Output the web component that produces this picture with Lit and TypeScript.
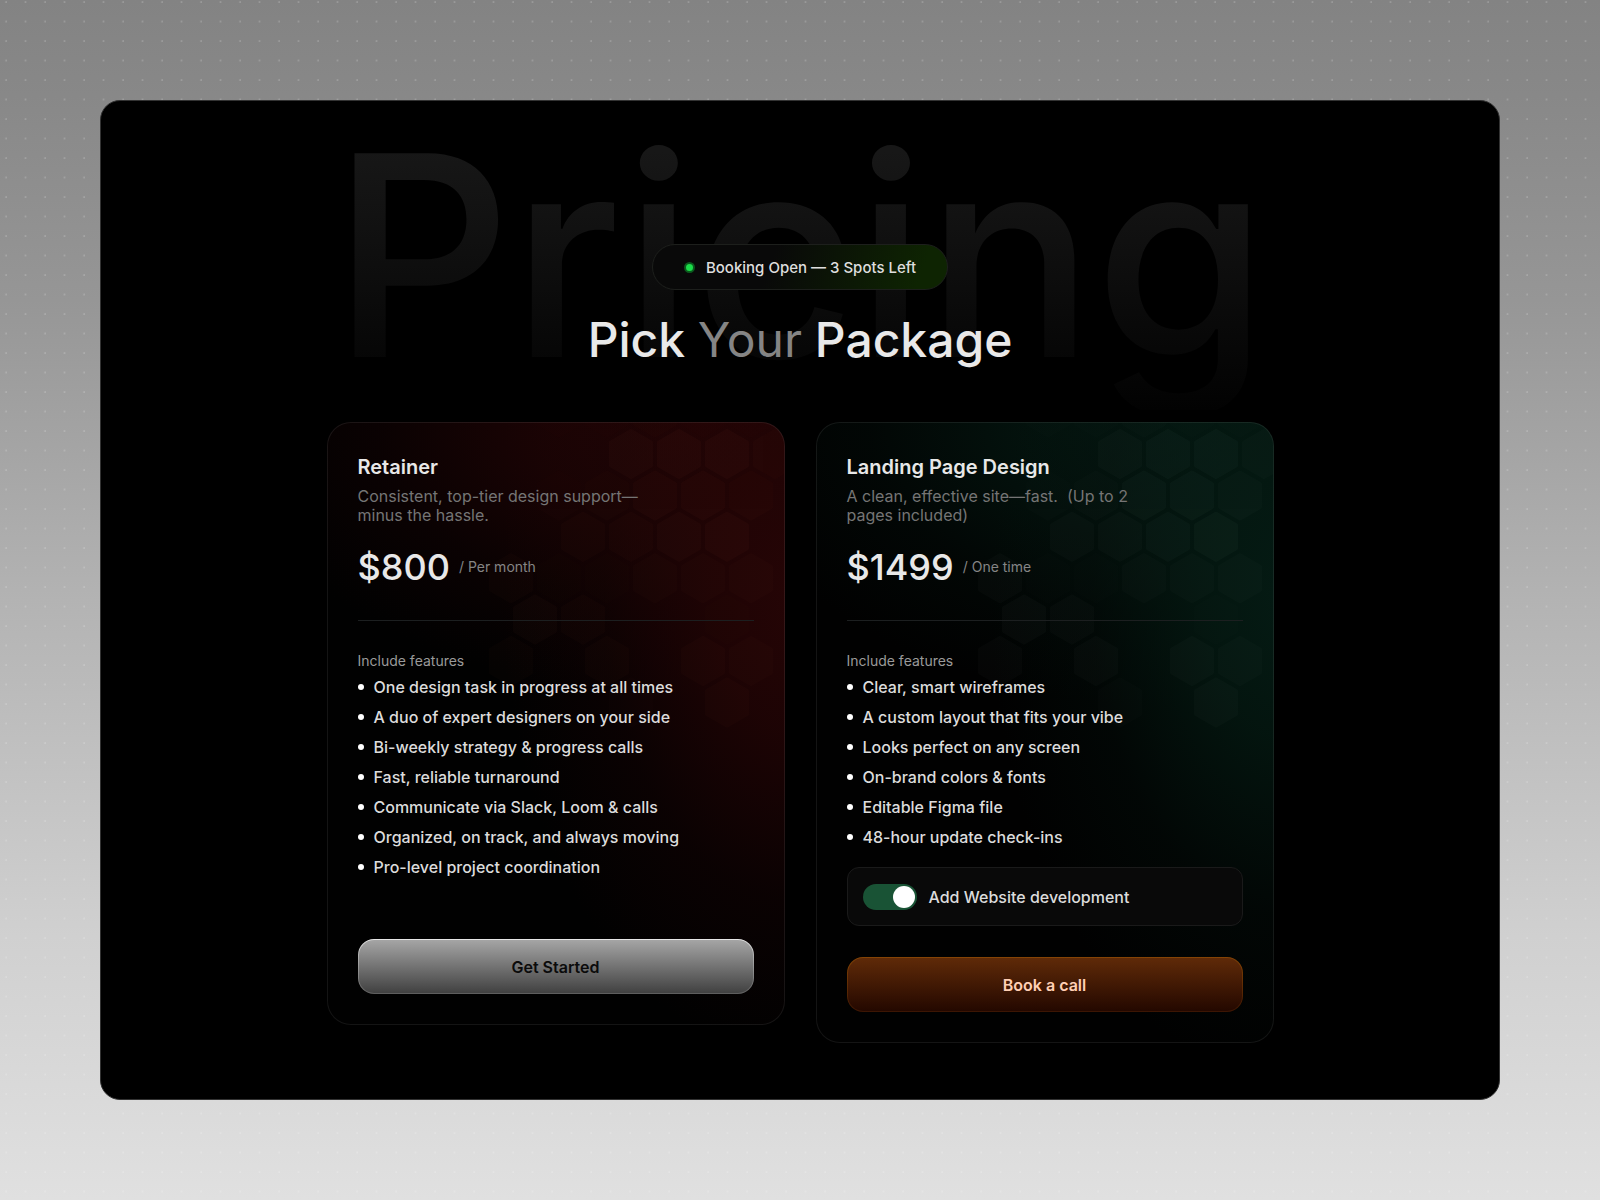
import { LitElement, html, css, svg } from "lit";
import { customElement, property } from "lit/decorators.js";

/* Honeycomb cells: [row, x centre, opacity] */
const CELLS: [number, number, number][] = [
  [-1, 233, 0.3], [-1, 281, 0.3], [-1, 329, 0.4], [-1, 377, 0.3], [-1, 425, 0.3],
  [0, 305, 0.7], [0, 353, 0.9], [0, 401, 0.9], [0, 449, 0.6],
  [1, 233, 0.35], [1, 281, 0.4], [1, 329, 0.8], [1, 377, 0.9], [1, 425, 0.6],
  [2, 257, 0.5], [2, 305, 0.5], [2, 353, 0.7], [2, 401, 0.8],
  [3, 185, 0.5], [3, 233, 0.2], [3, 281, 0.2], [3, 329, 0.4], [3, 377, 0.4], [3, 425, 0.4],
  [4, 209, 0.7], [4, 257, 0.5], [4, 401, 0.2],
  [5, 185, 0.5], [5, 281, 0.5], [5, 377, 0.6], [5, 425, 0.4],
  [6, 305, 0.3], [6, 401, 0.6],
];

const hexPoints = (cx: number, cy: number) =>
  [[0, -23], [20, -11.5], [20, 11.5], [0, 23], [-20, 11.5], [-20, -11.5]]
    .map(([x, y]) => `${cx + x},${cy + y}`)
    .join(" ");

@customElement("price-card")
class PriceCard extends LitElement {
  @property() heading = "";
  @property() blurb = "";
  @property() price = "";
  @property() period = "";
  @property() tone = "red";
  @property({ attribute: false }) features: string[] = [];
  @property() action = "";
  @property() extra = "";

  static styles = css`
    :host { display: block; }
    .card {
      position: relative;
      overflow: hidden;
      box-sizing: border-box;
      border: 1px solid rgba(255, 255, 255, 0.08);
      border-radius: 24px;
      padding: 31px 30px 30px;
      font-family: Inter, "Liberation Sans", sans-serif;
      color: #e8e8e8;
    }
    .red {
      background:
        radial-gradient(ellipse 66% 78% at 104% 28%, #260506 0%, rgba(34, 4, 5, 0.85) 30%, rgba(24, 3, 4, 0.4) 66%, rgba(0, 0, 0, 0) 100%),
        radial-gradient(ellipse 104% 46% at 82% 0%, #260506 0%, rgba(32, 4, 5, 0.8) 35%, rgba(24, 3, 4, 0.4) 68%, rgba(0, 0, 0, 0) 100%),
        #010101;
      background-origin: border-box;
    }
    .green {
      background:
        radial-gradient(ellipse 66% 78% at 104% 28%, #051b14 0%, rgba(4, 24, 17, 0.85) 30%, rgba(3, 15, 11, 0.4) 66%, rgba(0, 0, 0, 0) 100%),
        radial-gradient(ellipse 104% 46% at 82% 0%, #051b14 0%, rgba(4, 22, 16, 0.8) 35%, rgba(3, 15, 11, 0.4) 68%, rgba(0, 0, 0, 0) 100%),
        #010101;
      background-origin: border-box;
    }
    .comb { position: absolute; top: 0; right: 0; width: 458px; height: 320px; }
    .red .comb { fill: #ff8a60; stroke: #ff8a60; }
    .green .comb { fill: #d8ffe8; stroke: #d8ffe8; }
    .body { position: relative; display: flex; flex-direction: column; }
    h2 { margin: 0; font-size: 20px; line-height: 26px; font-weight: 600; }
    .blurb { margin: 7px 0 0; max-width: 290px; font-size: 16px; line-height: 19px; color: #757575; }
    .cost { display: flex; align-items: center; gap: 9px; margin-top: 18px; line-height: 48px; }
    .price { font-size: 36px; font-weight: 500; }
    .period { font-size: 14px; color: #858585; }
    hr { width: 100%; height: 1px; margin: 29px 0 31px; border: 0; background: #1c1f20; }
    .label { margin: 0; font-size: 14px; line-height: 18px; color: #9a9a9a; }
    ul { margin: 7px 0 0; padding: 0; list-style: none; }
    li { display: flex; align-items: center; gap: 10px; font-size: 16px; line-height: 20px; padding-bottom: 10px; font-weight: 500; color: #dcdcdc; }
    .dot { flex: none; width: 6px; height: 6px; border-radius: 3px; background: #fff; }
    .extra {
      display: flex; align-items: center; gap: 12px; margin-top: 10px; height: 57px; padding: 0 15px;
      background: #090909; border: 1px solid #1a1a1a; border-radius: 12px;
      font-size: 16px; font-weight: 500; color: #dcdcdc;
    }
    .switch {
      appearance: none; margin: 0; width: 54px; height: 26px; padding: 2px; border-radius: 13px;
      background: #3a3a3a; display: flex; cursor: pointer; box-sizing: border-box;
    }
    .switch::before { content: ""; width: 22px; height: 22px; border-radius: 11px; background: #fff; }
    .switch:checked { background: #195335; justify-content: flex-end; }
    button {
      margin-top: 52px; height: 55px; border-radius: 16px; cursor: pointer;
      font: 600 16px Inter, "Liberation Sans", sans-serif;
    }
    .extra + button { margin-top: 31px; }
    .red button {
      color: #0b0b0b; border: 1px solid transparent;
      background: linear-gradient(#a5a5a5, #414141) padding-box, linear-gradient(#e8e8e8, #b0b0b0 30%, #5d5d5d) border-box;
    }
    .green button {
      color: #ffcfb4; border: 1px solid transparent;
      background: linear-gradient(#5f2a08, #240800) padding-box, linear-gradient(#854405, #3c1503) border-box;
    }
  `;

  render() {
    return html`
      <article class="card ${this.tone}">
        <svg class="comb" viewBox="0 0 458 320" aria-hidden="true">
          ${CELLS.map(([row, x, o]) => svg`<polygon points=${hexPoints(x, 31 + row * 41.4)}
            stroke-width="4" stroke-linejoin="round" opacity=${o * 0.028}></polygon>`)}
        </svg>
        <div class="body">
          <h2>${this.heading}</h2>
          <p class="blurb">${this.blurb}</p>
          <div class="cost"><span class="price">${this.price}</span><span class="period">/ ${this.period}</span></div>
          <hr />
          <p class="label">Include features</p>
          <ul>${this.features.map((f) => html`<li><span class="dot"></span>${f}</li>`)}</ul>
          ${this.extra
            ? html`<label class="extra"><input class="switch" type="checkbox" role="switch" checked />${this.extra}</label>`
            : ""}
          <button type="button">${this.action}</button>
        </div>
      </article>
    `;
  }
}

@customElement("app-root")
class AppRoot extends LitElement {
  static styles = css`
    :host { display: block; }
    .page {
      box-sizing: border-box; min-height: 100vh; padding: 100px;
      display: flex; flex-direction: column;
      background:
        radial-gradient(circle at 6px 2px, rgba(255, 255, 255, 0.5), transparent 1px) 0 0 / calc(100vw / 82) calc(100vw / 82),
        linear-gradient(#838383, #888 8%, #969696 25%, #b3b3b3 50%, #d0d0d0 78%, #e0e0e0);
      font-family: Inter, "Liberation Sans", sans-serif;
    }
    .panel {
      position: relative; flex: 1; box-sizing: border-box; padding: 143px 32px 54px;
      background: #000; border: 1px solid #333; border-radius: 20px;
      display: flex; flex-direction: column; align-items: center;
    }
    .ghost {
      position: absolute; top: 1px; left: 0; right: 0; text-align: center;
      font-size: 280px; line-height: 308px; font-weight: 500; color: transparent;
      background: linear-gradient(#171717 16%, #101010 45%, #070707 80%, #020202 100%); background-clip: text; -webkit-background-clip: text;
    }
    .pill {
      position: relative; display: flex; align-items: center; gap: 11px; height: 44px; padding: 0 31px;
      border: 1px solid #1d1f1c; border-radius: 23px; color: #dedede;
      background: linear-gradient(110deg, #090909 40%, #0e2402 90%);
      font-size: 15px; font-weight: 500;
    }
    .led { width: 7px; height: 7px; border-radius: 6px; border: 2px solid #0b5a1d; background: #1bdc49; }
    h1 { position: relative; margin: 21px 0 0; font-size: 48px; line-height: 58px; font-weight: 500; color: #e9e9e9; }
    .soft { color: #858585; font-weight: 400; }
    .cards {
      position: relative; width: 100%; max-width: 947px; margin-top: 53px;
      display: grid; grid-template-columns: repeat(auto-fit, minmax(380px, 1fr)); gap: 31px; align-items: start;
    }
  `;

  render() {
    return html`
      <main class="page">
        <section class="panel">
          <div class="ghost" aria-hidden="true">Pricing</div>
          <div class="pill"><span class="led"></span>Booking Open — 3 Spots Left</div>
          <h1>Pick <span class="soft">Your</span> Package</h1>
          <div class="cards">
            <price-card tone="red" heading="Retainer" blurb="Consistent, top-tier design support—minus the hassle."
              price="$800" period="Per month" action="Get Started"
              .features=${[
                "One design task in progress at all times",
                "A duo of expert designers on your side",
                "Bi-weekly strategy & progress calls",
                "Fast, reliable turnaround",
                "Communicate via Slack, Loom & calls",
                "Organized, on track, and always moving",
                "Pro-level project coordination",
              ]}></price-card>
            <price-card tone="green" heading="Landing Page Design" blurb="A clean, effective site—fast. &nbsp;(Up to 2 pages included)"
              price="$1499" period="One time" action="Book a call" extra="Add Website development"
              .features=${[
                "Clear, smart wireframes",
                "A custom layout that fits your vibe",
                "Looks perfect on any screen",
                "On-brand colors & fonts",
                "Editable Figma file",
                "48-hour update check-ins",
              ]}></price-card>
          </div>
        </section>
      </main>
    `;
  }
}
